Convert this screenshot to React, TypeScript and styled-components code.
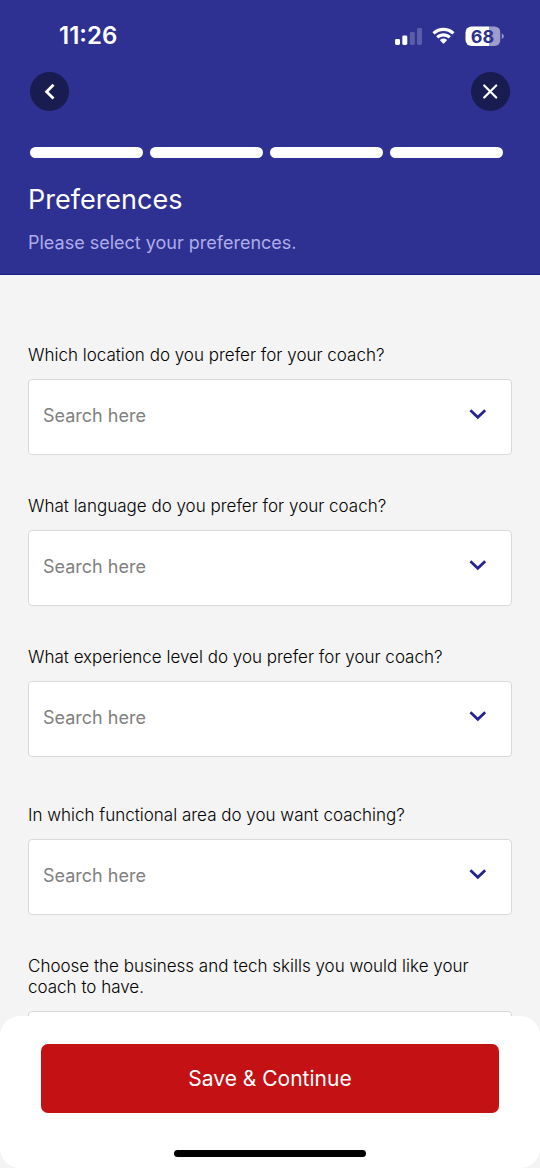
import React, { useId } from "react";
import styled, { createGlobalStyle } from "styled-components";

const GlobalStyle = createGlobalStyle`
  *, *::before, *::after { box-sizing: border-box; }
  body {
    margin: 0;
    background: #f4f4f4;
    font-family: Inter, "Liberation Sans", sans-serif;
    font-weight: 400;
  }
  button, input { font: inherit; }
`;

const Screen = styled.div`
  display: flex;
  flex-direction: column;
  height: 100vh;
  background: #f4f4f4;
`;

const Header = styled.header`
  flex: none;
  padding-bottom: 19px;
  background: #2e3092;
  border-bottom: 1px solid #1f1c86;
  color: #fff;
`;

const StatusBar = styled.div`
  display: flex;
  align-items: center;
  justify-content: space-between;
  height: 72px;
  padding: 0 36px 0 59px;
`;

const Clock = styled.time`
  font-size: 24px;
  line-height: 28px;
  font-weight: 600;
`;

const StatusIcons = styled.div`
  display: flex;
  align-items: center;
  gap: 10px;
`;

const NavRow = styled.nav`
  display: flex;
  justify-content: space-between;
  padding: 0 30px;
`;

const RoundButton = styled.button`
  display: grid;
  place-items: center;
  width: 39px;
  height: 39px;
  padding: 0;
  border: 0;
  border-radius: 50%;
  background: #191c50;
  color: #fff;
`;

const Steps = styled.ol`
  display: grid;
  grid-template-columns: repeat(4, 1fr);
  gap: 7px;
  margin: 36px 37px 0 30px;
  padding: 0;
  list-style: none;
`;

const Step = styled.li`
  height: 11px;
  border-radius: 6px;
  background: #fff;
`;

const Title = styled.h1`
  margin: 25px 28px 0;
  font-size: 27px;
  line-height: 34px;
  font-weight: 400;
`;

const Subtitle = styled.p`
  margin: 14px 28px 0;
  font-size: 18px;
  line-height: 24px;
  color: #adade8;
`;

const Content = styled.main`
  flex: 1;
  min-height: 0;
  overflow-y: auto;
  scrollbar-width: none;
  padding: 70px 28px 40px;
`;

const Form = styled.form`
  display: flex;
  flex-direction: column;
  gap: 48px;
`;

const FieldGroup = styled.div`
  display: flex;
  flex-direction: column;
  gap: 41px;
`;

const FieldBlock = styled.div`
  display: flex;
  flex-direction: column;
  gap: 13px;
`;

const Label = styled.label`
  font-size: 17px;
  line-height: 21px;
  font-weight: 300;
  color: #000;
`;

const Combo = styled.div`
  display: flex;
  align-items: center;
  height: 76px;
  padding: 0 20px 4px 14px;
  border: 1px solid #d9d9d9;
  border-radius: 4px;
  background: #fff;
`;

const SearchInput = styled.input`
  flex: 1;
  min-width: 0;
  height: 40px;
  padding: 0;
  border: 0;
  outline: 0;
  background: transparent;
  font-size: 18px;
  color: #0c0c0c;
  &::placeholder { color: #808080; opacity: 1; }
`;

const ToggleButton = styled.button`
  display: grid;
  place-items: center;
  width: 26px;
  height: 40px;
  padding: 0 0 2px;
  border: 0;
  background: transparent;
  color: #252390;
`;

const Footer = styled.footer`
  flex: none;
  display: flex;
  flex-direction: column;
  align-items: center;
  gap: 37px;
  padding: 28px 41px 11px;
  border-radius: 20px;
  background: #fff;
`;

const SaveButton = styled.button`
  width: 100%;
  height: 69px;
  padding: 0;
  border: 0;
  border-radius: 7px;
  background: #c41114;
  color: #fff;
  font-size: 21px;
`;

const HomeIndicator = styled.div`
  width: 192px;
  height: 7px;
  border-radius: 4px;
  background: #000;
`;

function SignalIcon() {
  return (
    <svg width="28" height="18" viewBox="0 0 28 18" fill="#fff" aria-hidden="true">
      <rect x="1" y="12" width="5" height="6" rx="1.4" />
      <rect x="8.3" y="8.5" width="5" height="9.5" rx="1.4" />
      <rect x="15.8" y="5" width="5" height="13" rx="1.4" opacity="0.22" />
      <rect x="23" y="1" width="5" height="17" rx="1.4" opacity="0.22" />
    </svg>
  );
}

function WifiIcon() {
  return (
    <svg width="23" height="18" viewBox="0 0 23 18" fill="#fff" aria-hidden="true">
      <path d="M11.5 3.9c3.200 0 6.200 1.200 8.500 3.400.2.2.5.2.7 0l1.600-1.700c.2-.2.2-.5 0-.7C16.300-.700 6.700-.700.7 4.900c-.2.200-.2.500 0 .7l1.600 1.700c.2.200.5.200.7 0 2.300-2.200 5.300-3.400 8.500-3.400z" />
      <path d="M11.500 9.500c1.800 0 3.400.700 4.700 1.800.2.200.5.200.7 0l1.700-1.700c.2-.2.2-.5 0-.7-4-3.700-10.200-3.700-14.200 0-.2.200-.2.500 0 .7l1.700 1.700c.2.200.5.200.7 0 1.300-1.100 2.900-1.800 4.700-1.800z" />
      <path d="M14.800 13.400c.2-.2.2-.5 0-.7-1.900-1.600-4.700-1.600-6.600 0-.2.200-.2.500 0 .7l2.900 3.200c.2.200.6.200.8 0z" />
    </svg>
  );
}

function BatteryIcon() {
  return (
    <svg width="39" height="20" viewBox="0 0 39 20" role="img" aria-label="Battery 68%">
      <defs>
        <clipPath id="battery-body">
          <rect width="35" height="19.5" x="0.500" y="0.500" rx="6" />
        </clipPath>
      </defs>
      <g clipPath="url(#battery-body)">
        <rect width="24.500" height="20" fill="#fff" />
        <rect x="24.500" width="11" height="20" fill="#9c9dcc" />
      </g>
      <path d="M36.800 7.500v5.500c1.200-.5 1.900-1.500 1.900-2.750s-.7-2.250-1.900-2.750z" fill="#9c9dcc" />
      <text
        x="17.500"
        y="16.500"
        textAnchor="middle"
        fontFamily="Inter, sans-serif"
        fontSize="18"
        fontWeight="700"
        fill="#2e3092"
      >
        68
      </text>
    </svg>
  );
}

function BackIcon() {
  return (
    <svg width="20" height="20" viewBox="0 0 20 20" fill="none" stroke="currentColor" strokeWidth="2.800" aria-hidden="true">
      <path d="M13.500 2.800 6.600 9.700l6.900 6.900" />
    </svg>
  );
}

function CloseIcon() {
  return (
    <svg width="19" height="19" viewBox="0 0 19 19" fill="none" stroke="currentColor" strokeWidth="2.200" strokeLinecap="round" aria-hidden="true">
      <path d="M3.200 3.500l12 12M15.200 3.500l-12 12" />
    </svg>
  );
}

function ChevronIcon() {
  return (
    <svg width="18" height="12" viewBox="0 0 18 12" fill="none" stroke="currentColor" strokeWidth="2.700" aria-hidden="true">
      <path d="M1.400 2.200 8.800 9.300l7.400-7.100" />
    </svg>
  );
}

function SearchField({ label }: { label: string }) {
  const id = useId();
  return (
    <FieldBlock>
      <Label htmlFor={id}>{label}</Label>
      <Combo>
        <SearchInput id={id} type="text" role="combobox" aria-expanded={false} placeholder="Search here" />
        <ToggleButton type="button" aria-label="Show options">
          <ChevronIcon />
        </ToggleButton>
      </Combo>
    </FieldBlock>
  );
}

const groups = [
  [
    "Which location do you prefer for your coach?",
    "What language do you prefer for your coach?",
    "What experience level do you prefer for your coach?",
  ],
  [
    "In which functional area do you want coaching?",
    "Choose the business and tech skills you would like your coach to have.",
  ],
];

export default function App() {
  return (
    <Screen>
      <GlobalStyle />
      <Header>
        <StatusBar>
          <Clock>11:26</Clock>
          <StatusIcons>
            <SignalIcon />
            <WifiIcon />
            <BatteryIcon />
          </StatusIcons>
        </StatusBar>
        <NavRow>
          <RoundButton type="button" aria-label="Back">
            <BackIcon />
          </RoundButton>
          <RoundButton type="button" aria-label="Close">
            <CloseIcon />
          </RoundButton>
        </NavRow>
        <Steps aria-label="Step 4 of 4">
          {[1, 2, 3, 4].map((step) => (
            <Step key={step} />
          ))}
        </Steps>
        <Title>Preferences</Title>
        <Subtitle>Please select your preferences.</Subtitle>
      </Header>
      <Content>
        <Form id="preferences">
          {groups.map((labels) => (
            <FieldGroup key={labels[0]}>
              {labels.map((label) => (
                <SearchField key={label} label={label} />
              ))}
            </FieldGroup>
          ))}
        </Form>
      </Content>
      <Footer>
        <SaveButton type="submit" form="preferences">
          Save &amp; Continue
        </SaveButton>
        <HomeIndicator />
      </Footer>
    </Screen>
  );
}
